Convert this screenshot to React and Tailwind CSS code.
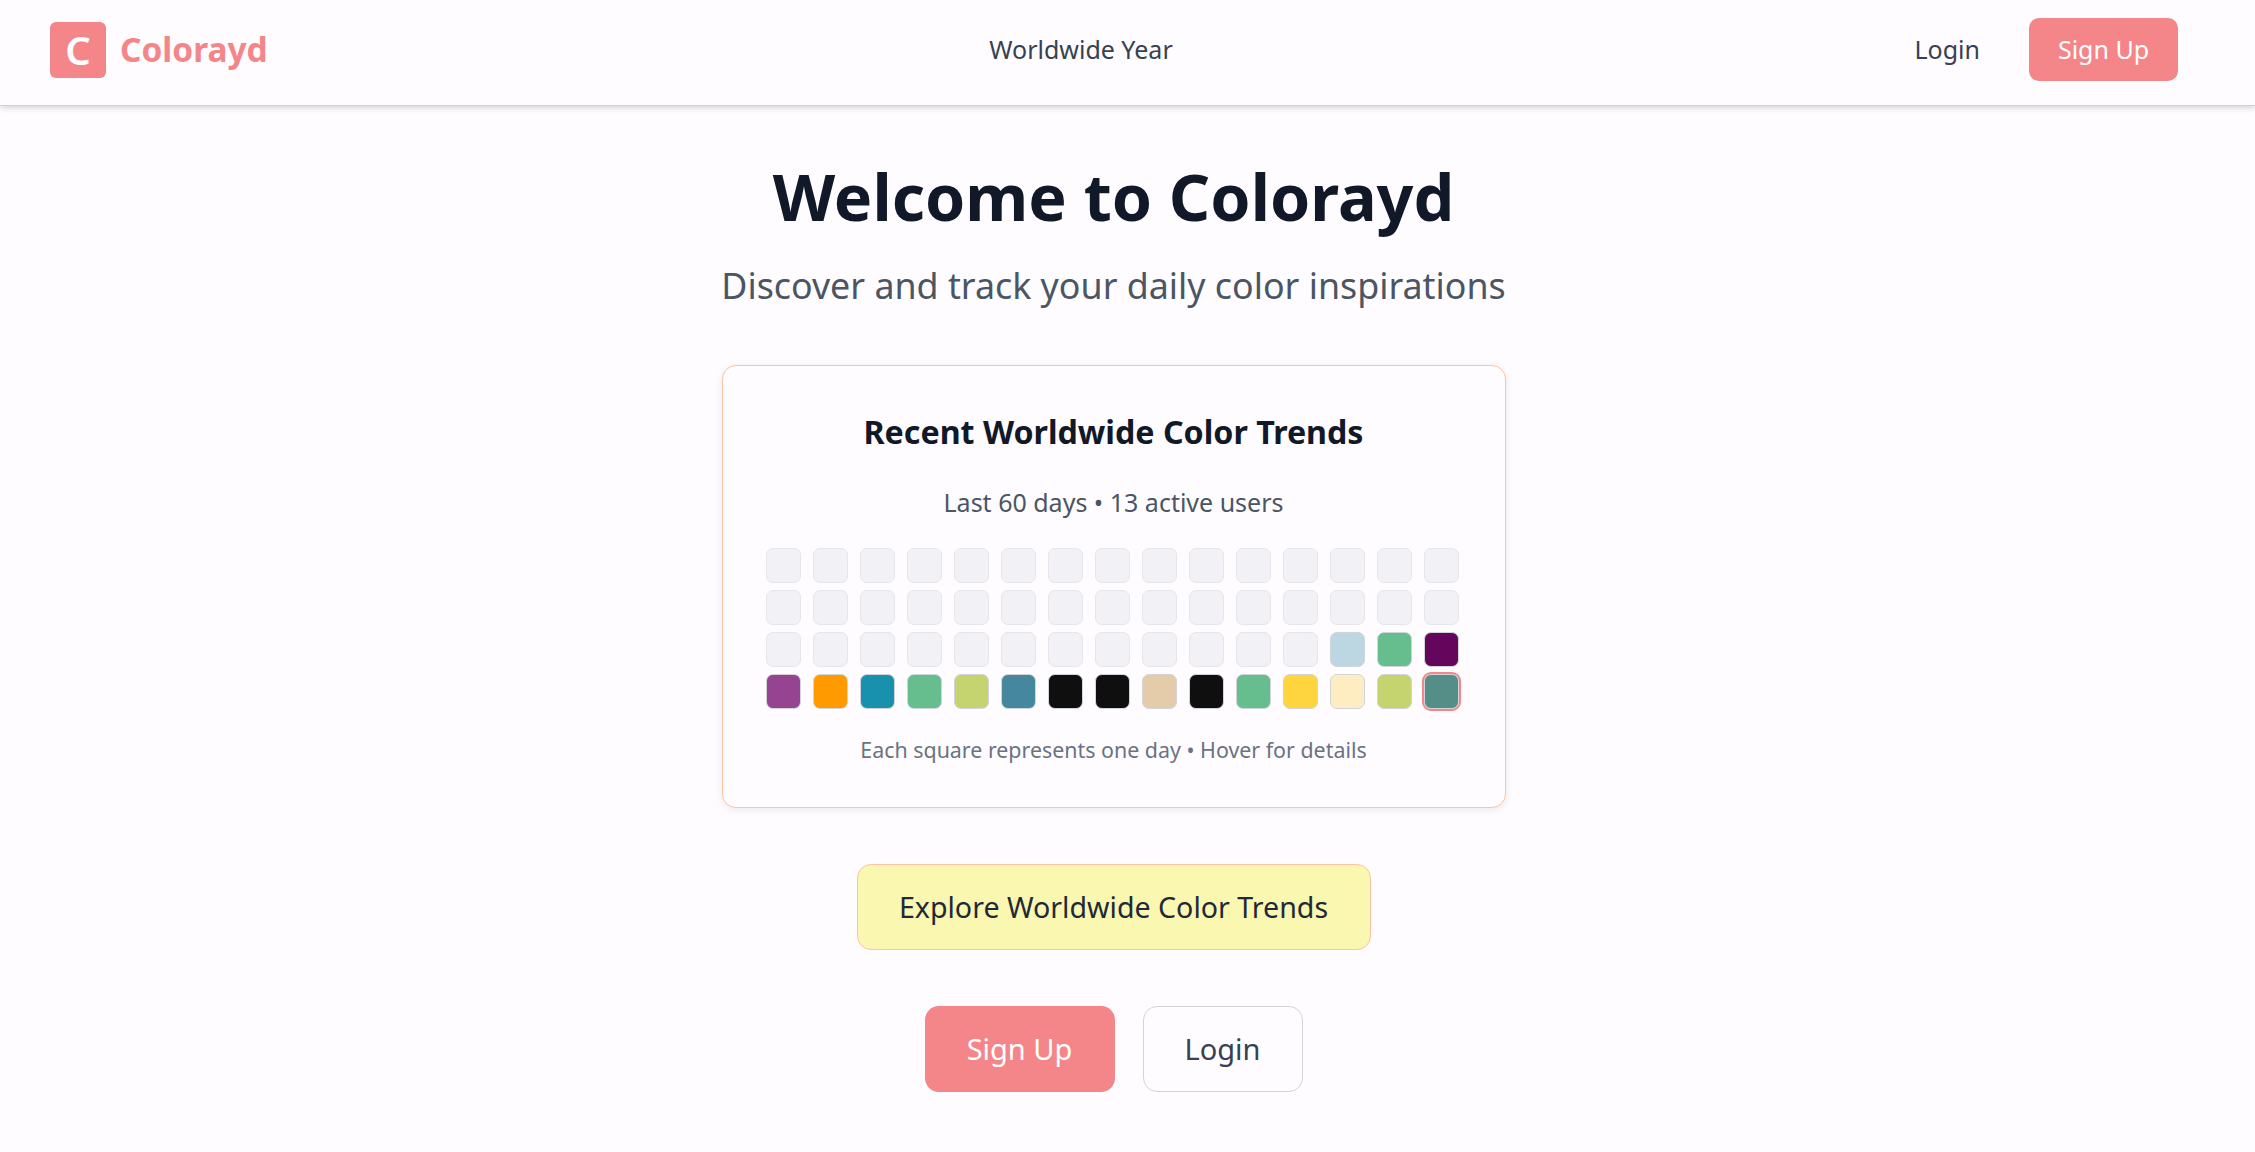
import React from "react";

const colored = {
  42: "bg-[#bdd7e2]",
  43: "bg-[#66bd8e]",
  44: "bg-[#64075c]",
  45: "bg-[#964391]",
  46: "bg-[#ff9a00]",
  47: "bg-[#1791ae]",
  48: "bg-[#66bd8e]",
  49: "bg-[#c5d46f]",
  50: "bg-[#45879d]",
  51: "bg-[#0f0f0f]",
  52: "bg-[#0f0f0f]",
  53: "bg-[#e4ccaa]",
  54: "bg-[#0f0f0f]",
  55: "bg-[#66bd8e]",
  56: "bg-[#ffd53d]",
  57: "bg-[#ffedc2]",
  58: "bg-[#c5d46f]",
  59: "bg-[#558e87]",
};

const days = Array.from({ length: 60 }, (_, i) => i);

const Square = ({ day }) => {
  const color = colored[day];
  if (!color) {
    return <div className="h-[35px] w-[35px] rounded-[7px] border border-[#e5e5ea] bg-[#f2f2f6]" />;
  }
  return (
    <div
      className={`h-[35px] w-[35px] rounded-[7px] border border-[#d1d5db] ${color} ${
        day === 59 ? "outline-2 outline-[#f48588]" : ""
      }`}
    />
  );
};

export default function App() {
  return (
    <div className="min-h-[1152px] bg-[#fefcff] font-['Noto_Sans',sans-serif]">
      {/* Nav */}
      <nav className="flex h-[106px] items-center justify-between border-b border-[#fcc4a4] pb-[6px] pl-[50px] pr-[77px] shadow-[0_2px_6px_rgba(0,0,0,0.16)]">
        <div className="flex w-[400px] items-center gap-[14px]">
          <div className="flex h-[56px] w-[56px] items-center justify-center rounded-[6px] bg-[#f48588] text-[40px] leading-none font-semibold text-white">
            C
          </div>
          <span className="text-[33.4px] font-bold text-[#f48588]">Colorayd</span>
        </div>
        <span className="mr-[66px] text-[25px] text-[#374151]">Worldwide Year</span>
        <div className="flex w-[400px] items-center justify-end gap-[49px]">
          <span className="text-[25px] text-[#374151]">Login</span>
          <button className="h-[63px] w-[149px] rounded-[10px] bg-[#f48588] text-[25px] text-white">
            Sign Up
          </button>
        </div>
      </nav>

      {/* Main */}
      <main className="flex flex-col items-center pr-[28px] pt-[50px]">
        <h1 className="text-[64.6px] leading-[80px] font-bold text-[#111827]">Welcome to Colorayd</h1>
        <p className="mt-[22px] text-[35.8px] leading-[54px] text-[#4b5563]">
          Discover and track your daily color inspirations
        </p>

        {/* Trends card */}
        <section className="mt-[53px] flex h-[443px] w-[784px] flex-col items-center rounded-[14px] border border-[#fcc4a4] bg-[#fefcff] pt-[46px] shadow-[0_2px_8px_rgba(0,0,0,0.08)]">
          <h2 className="text-[32.2px] leading-[40px] font-bold text-[#111827]">Recent Worldwide Color Trends</h2>
          <p className="mt-[32px] text-[25px] leading-[36px] text-[#4b5563]">Last 60 days • 13 active users</p>
          <div className="mt-[28px] mr-[3px] grid grid-cols-[repeat(15,35px)] gap-x-[12px] gap-y-[7px]">
            {days.map((day) => (
              <Square key={day} day={day} />
            ))}
          </div>
          <p className="mt-[27px] text-[21.4px] leading-[28px] text-[#6b7280]">
            Each square represents one day • Hover for details
          </p>
        </section>

        <button className="mt-[56px] h-[86px] w-[514px] rounded-[14px] border border-[#fcc4a4] bg-[#f9f7b0] text-[28.6px] text-[#1f2937]">
          Explore Worldwide Color Trends
        </button>

        <div className="mt-[56px] flex gap-[28px]">
          <button className="h-[86px] w-[190px] rounded-[14px] bg-[#f48588] text-[29px] text-white">Sign Up</button>
          <button className="h-[86px] w-[160px] rounded-[14px] border border-[#d1d5db] text-[29px] text-[#374151]">
            Login
          </button>
        </div>
      </main>
    </div>
  );
}
